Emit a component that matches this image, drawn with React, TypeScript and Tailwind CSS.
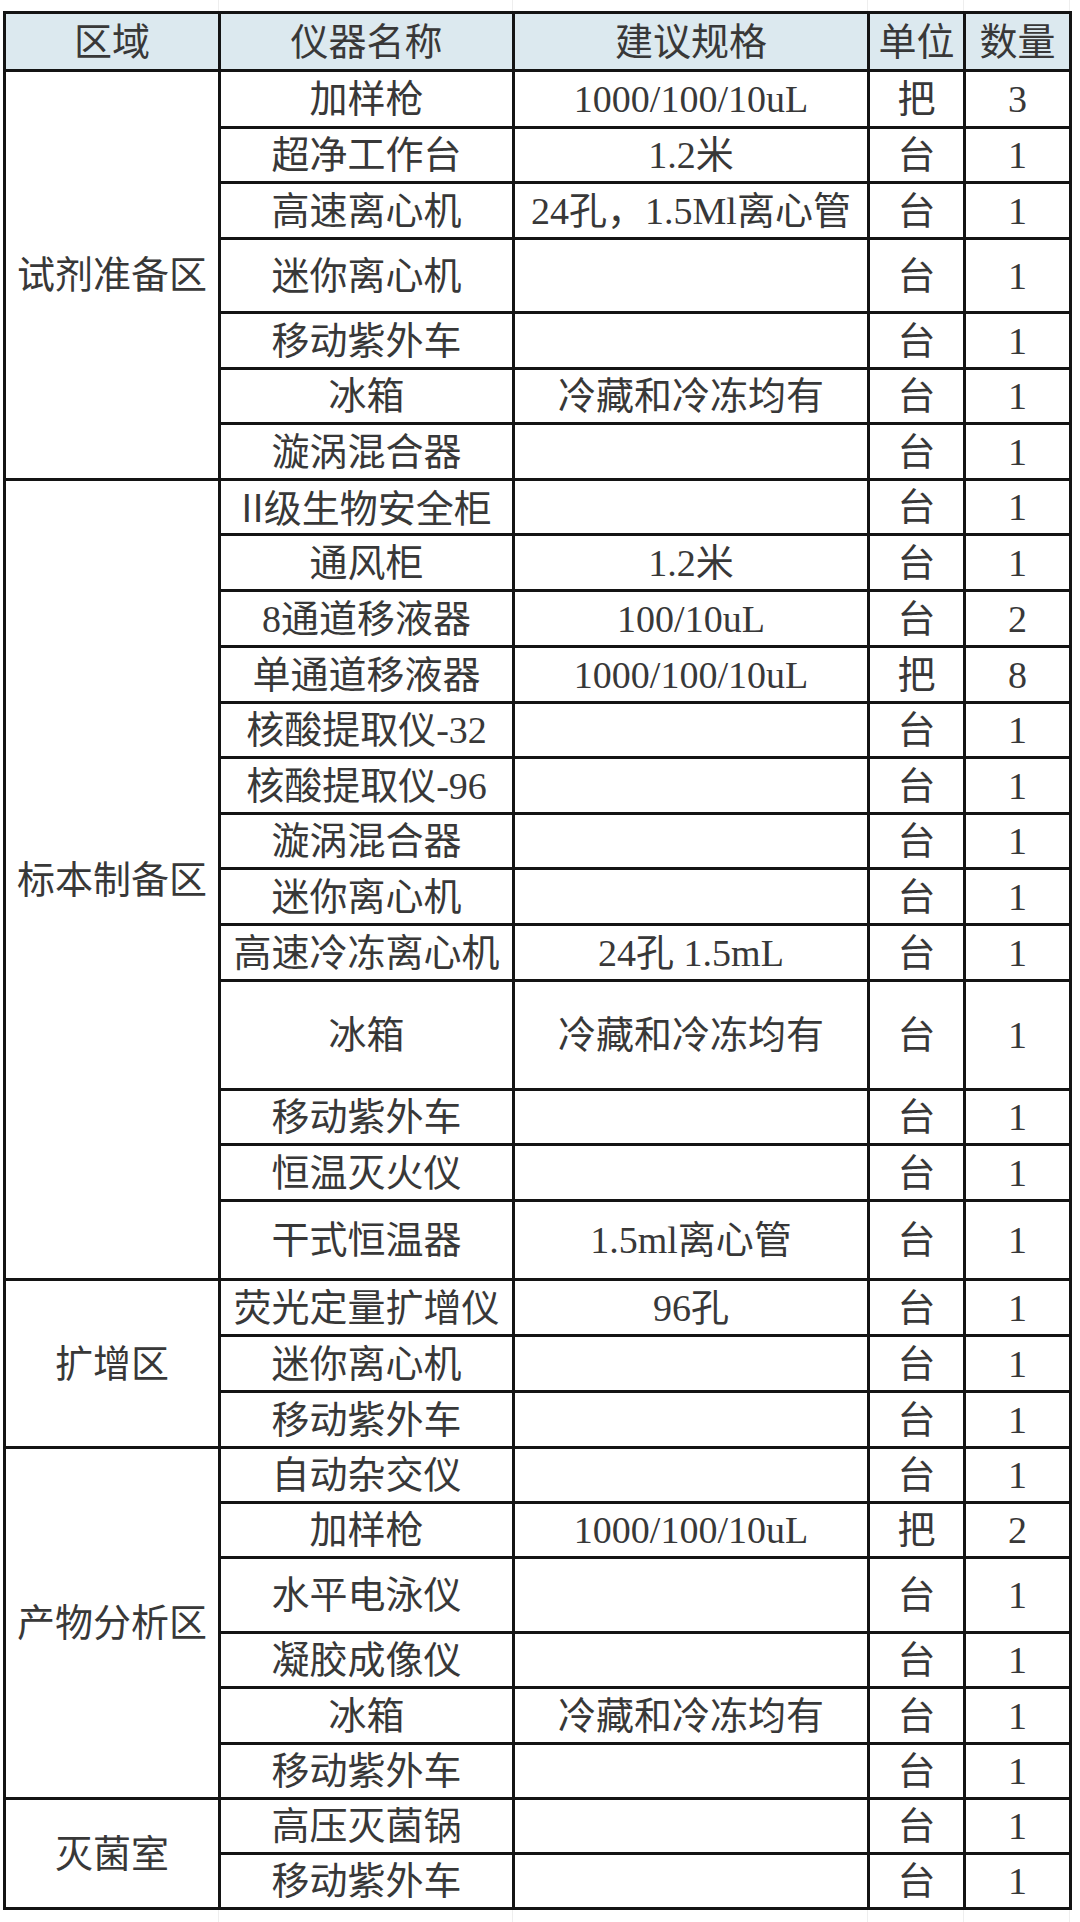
type Item = { name: string; spec?: string; unit: string; qty: string; h: number };
type Section = { area: string; items: Item[] };

const sections: Section[] = [
	{
		area: "试剂准备区",
		items: [
			{ name: "加样枪", spec: "1000/100/10uL", unit: "把", qty: "3", h: 57 },
			{ name: "超净工作台", spec: "1.2米", unit: "台", qty: "1", h: 55 },
			{ name: "高速离心机", spec: "24孔，1.5Ml离心管", unit: "台", qty: "1", h: 56 },
			{ name: "迷你离心机", unit: "台", qty: "1", h: 74 },
			{ name: "移动紫外车", unit: "台", qty: "1", h: 56 },
			{ name: "冰箱", spec: "冷藏和冷冻均有", unit: "台", qty: "1", h: 55 },
			{ name: "漩涡混合器", unit: "台", qty: "1", h: 56 },
		],
	},
	{
		area: "标本制备区",
		items: [
			{ name: "II级生物安全柜", unit: "台", qty: "1", h: 55 },
			{ name: "通风柜", spec: "1.2米", unit: "台", qty: "1", h: 56 },
			{ name: "8通道移液器", spec: "100/10uL", unit: "台", qty: "2", h: 56 },
			{ name: "单通道移液器", spec: "1000/100/10uL", unit: "把", qty: "8", h: 56 },
			{ name: "核酸提取仪-32", unit: "台", qty: "1", h: 55 },
			{ name: "核酸提取仪-96", unit: "台", qty: "1", h: 56 },
			{ name: "漩涡混合器", unit: "台", qty: "1", h: 55 },
			{ name: "迷你离心机", unit: "台", qty: "1", h: 56 },
			{ name: "高速冷冻离心机", spec: "24孔 1.5mL", unit: "台", qty: "1", h: 56 },
			{ name: "冰箱", spec: "冷藏和冷冻均有", unit: "台", qty: "1", h: 109 },
			{ name: "移动紫外车", unit: "台", qty: "1", h: 55 },
			{ name: "恒温灭火仪", unit: "台", qty: "1", h: 56 },
			{ name: "干式恒温器", spec: "1.5ml离心管", unit: "台", qty: "1", h: 79 },
		],
	},
	{
		area: "扩增区",
		items: [
			{ name: "荧光定量扩增仪", spec: "96孔", unit: "台", qty: "1", h: 56 },
			{ name: "迷你离心机", unit: "台", qty: "1", h: 56 },
			{ name: "移动紫外车", unit: "台", qty: "1", h: 56 },
		],
	},
	{
		area: "产物分析区",
		items: [
			{ name: "自动杂交仪", unit: "台", qty: "1", h: 55 },
			{ name: "加样枪", spec: "1000/100/10uL", unit: "把", qty: "2", h: 55 },
			{ name: "水平电泳仪", unit: "台", qty: "1", h: 75 },
			{ name: "凝胶成像仪", unit: "台", qty: "1", h: 55 },
			{ name: "冰箱", spec: "冷藏和冷冻均有", unit: "台", qty: "1", h: 56 },
			{ name: "移动紫外车", unit: "台", qty: "1", h: 55 },
		],
	},
	{
		area: "灭菌室",
		items: [
			{ name: "高压灭菌锅", unit: "台", qty: "1", h: 55 },
			{ name: "移动紫外车", unit: "台", qty: "1", h: 55 },
		],
	},
];

const cell = "border-[3px] border-[#141414] text-center align-middle p-0 whitespace-nowrap";

function Name({ text }: { text: string }) {
	// the roman numeral in the source is set in the sans face
	if (text.startsWith("II")) {
		return (
			<>
				<span className="font-['Noto_Sans_CJK_SC',sans-serif]">II</span>
				{text.slice(2)}
			</>
		);
	}
	return <>{text}</>;
}

function GridStrip({ h }: { h: string }) {
	return (
		<div className={`flex ${h}`}>
			<div className="w-[219px] border-r border-[#eeeeee]" />
			<div className="w-[294px] border-r border-[#eeeeee]" />
			<div className="w-[355px] border-r border-[#eeeeee]" />
			<div className="w-[96px] border-r border-[#eeeeee]" />
			<div className="w-[106px] border-r border-[#eeeeee]" />
		</div>
	);
}

export default function App() {
	return (
		<div className="min-h-[1922px] w-[1080px] bg-white text-[#383838] font-['Liberation_Serif','Noto_Sans_CJK_SC',serif]">
			<GridStrip h="h-[11px]" />
			<table className="ml-[3px] w-[1069px] table-fixed border-collapse text-[38px] leading-none">
				<colgroup>
					<col className="w-[215px]" />
					<col className="w-[294px]" />
					<col className="w-[355px]" />
					<col className="w-[96px]" />
					<col className="w-[106px]" />
				</colgroup>
				<thead>
					<tr className="h-[58px] bg-[#dce9ef]">
						<th className={`${cell} font-normal`}>区域</th>
						<th className={`${cell} font-normal`}>仪器名称</th>
						<th className={`${cell} font-normal`}>建议规格</th>
						<th className={`${cell} font-normal`}>单位</th>
						<th className={`${cell} font-normal`}>数量</th>
					</tr>
				</thead>
				<tbody>
					{sections.map((s) =>
						s.items.map((it, i) => (
							<tr key={s.area + i} style={{ height: it.h }}>
								{i === 0 && (
									<td className={cell} rowSpan={s.items.length}>
										{s.area}
									</td>
								)}
								<td className={cell}>
									<Name text={it.name} />
								</td>
								<td className={cell}>{it.spec ?? ""}</td>
								<td className={cell}>{it.unit}</td>
								<td className={cell}>{it.qty}</td>
							</tr>
						)),
					)}
				</tbody>
			</table>
			<GridStrip h="h-[12px]" />
		</div>
	);
}
